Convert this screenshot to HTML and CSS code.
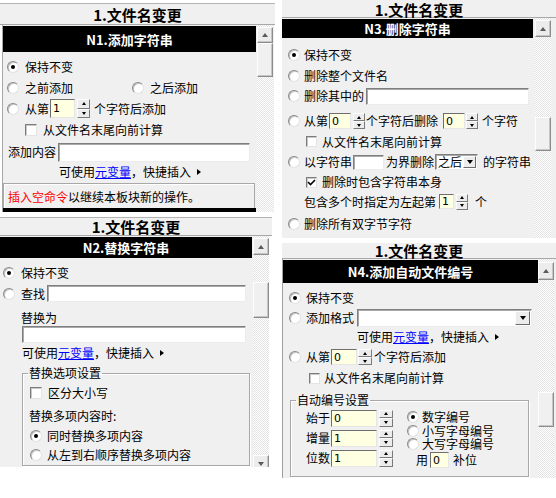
FILE: index.html
```html
<!DOCTYPE html>
<html lang="zh-CN">
<head>
<meta charset="utf-8">
<title>文件名变更</title>
<link rel="stylesheet" href="styles.css">
</head>
<body>
<div class="page">
  <div class="col col-left">
    <section class="panel p1">
      <div class="title">1.文件名变更</div>
      <div class="body">
        <div class="main">
          <div class="hdr">N1.添加字符串</div>
          <div class="content">
            <div class="row h20 pl4 mt5"><span class="rb on"></span><span class="t">保持不变</span></div>
            <div class="row h21 pl4"><span class="opt"><span class="rb"></span><span class="t">之前添加</span></span><span class="rb"></span><span class="t">之后添加</span></div>
            <div class="row h21 pl4"><span class="rb"></span><span class="t">从第</span><span class="num n-p1">1</span><span class="spin s-p1"><i class="su"></i><i class="sd"></i></span><span class="t ml4">个字符后添加</span></div>
            <div class="row h22 pl22"><span class="cb"></span><span class="t">从文件名末尾向前计算</span></div>
            <div class="row h22 pl5"><span class="t">添加内容</span><span class="edit e-p1"></span></div>
            <div class="row h17 pl56"><span class="t">可使用<span class="link">元变量</span>，快捷插入</span><span class="tri"></span></div>
            <div class="notice"><span class="red">插入空命令</span><span class="t"> 以继续本板块新的操作。</span></div>
            <div class="cutbar"></div>
          </div>
        </div>
        <div class="scroll"><span class="sbtn up"></span><span class="thumb"></span></div>
      </div>
    </section>

    <section class="panel p2">
      <div class="title">1.文件名变更</div>
      <div class="body">
        <div class="main">
          <div class="hdr">N2.替换字符串</div>
          <div class="content">
            <div class="row h20 pl3 mt5"><span class="rb on"></span><span class="t">保持不变</span></div>
            <div class="row h21 pl3"><span class="rb"></span><span class="t">查找</span><span class="edit e-p2a"></span></div>
            <div class="row h16 pl21 mt6"><span class="t">替换为</span></div>
            <div class="row h17 pl22"><span class="edit e-p2b"></span></div>
            <div class="row h18 pl22 mt1"><span class="t">可使用<span class="link">元变量</span>，快捷插入</span><span class="tri"></span></div>
            <fieldset class="group g-p2">
              <legend>替换选项设置</legend>
              <div class="row h20 pl7 mt4"><span class="cb"></span><span class="t">区分大小写</span></div>
              <div class="row h20 pl6 mt3"><span class="t">替换多项内容时:</span></div>
              <div class="row h19 pl7"><span class="rb on"></span><span class="t">同时替换多项内容</span></div>
              <div class="row h20 pl7"><span class="rb"></span><span class="t">从左到右顺序替换多项内容</span></div>
            </fieldset>
          </div>
        </div>
        <div class="scroll"><span class="sbtn up"></span><span class="thumb"></span><span class="sbtn down"></span></div>
      </div>
    </section>
  </div>

  <div class="col col-right">
    <section class="panel p3">
      <div class="title">1.文件名变更</div>
      <div class="body">
        <div class="main">
          <div class="hdr">N3.删除字符串</div>
          <div class="content">
            <div class="row h20 pl6 mt7"><span class="rb on"></span><span class="t">保持不变</span></div>
            <div class="row h21 pl6"><span class="rb"></span><span class="t">删除整个文件名</span></div>
            <div class="row h20 pl6"><span class="rb"></span><span class="t">删除其中的</span><span class="edit e-p3a"></span></div>
            <div class="row h20 pl6 mt5"><span class="rb"></span><span class="t">从第</span><span class="num n-p3">0</span><span class="spin s-p3"><i class="su"></i><i class="sd"></i></span><span class="t ml1">个字符后删除</span><span class="num n-p3 ml5">0</span><span class="spin s-p3 ml1"><i class="su"></i><i class="sd"></i></span><span class="t ml4">个字符</span></div>
            <div class="row h21 pl24"><span class="cb"></span><span class="t">从文件名末尾向前计算</span></div>
            <div class="row h20 pl6"><span class="rb"></span><span class="t">以字符串</span><span class="edit e-p3b"></span><span class="t ml2">为界删除</span><span class="combo c-p3"><span class="val">之后</span><span class="dd"></span></span><span class="t ml5">的字符串</span></div>
            <div class="row h20 pl24"><span class="cb on"><svg viewBox="0 0 9 9" width="9" height="9"><path d="M1 4 L3.5 6.5 L8 2" fill="none" stroke="#000" stroke-width="1.6"/></svg></span><span class="t">删除时包含字符串本身</span></div>
            <div class="row h19 pl22"><span class="t">包含多个时指定为左起第</span><span class="num n-p3b">1</span><span class="spin s-p3b"><i class="su"></i><i class="sd"></i></span><span class="t ml7">个</span></div>
            <div class="row h20 pl6 mt3"><span class="rb"></span><span class="t">删除所有双字节字符</span></div>
          </div>
        </div>
        <div class="scroll"><span class="sbtn up"></span><span class="thumb"></span></div>
      </div>
    </section>

    <section class="panel p4">
      <div class="title">1.文件名变更</div>
      <div class="body">
        <div class="main">
          <div class="hdr">N4.添加自动文件编号</div>
          <div class="content">
            <div class="row h20 pl6 mt5"><span class="rb on"></span><span class="t">保持不变</span></div>
            <div class="row h20 pl6"><span class="rb"></span><span class="t">添加格式</span><span class="combo c-p4"><span class="val"></span><span class="dd"></span></span></div>
            <div class="row h18 pl74"><span class="t">可使用<span class="link">元变量</span>，快捷插入</span><span class="tri"></span></div>
            <div class="row h22 pl6"><span class="rb"></span><span class="t">从第</span><span class="num n-p4">0</span><span class="spin s-p4"><i class="su"></i><i class="sd"></i></span><span class="t ml2">个字符后添加</span></div>
            <div class="row h20 pl26"><span class="cb"></span><span class="t">从文件名末尾向前计算</span></div>
            <fieldset class="group g-p4">
              <legend>自动编号设置</legend>
              <div class="numset">
                <div class="ncol">
                  <div class="row h20"><span class="t">始于</span><span class="num n-p4b">0</span><span class="spin s-p4b"><i class="su"></i><i class="sd"></i></span></div>
                  <div class="row h20"><span class="t">增量</span><span class="num n-p4b">1</span><span class="spin s-p4b"><i class="su"></i><i class="sd"></i></span></div>
                  <div class="row h20"><span class="t">位数</span><span class="num n-p4b">1</span><span class="spin s-p4b"><i class="su"></i><i class="sd"></i></span></div>
                </div>
                <div class="rcol">
                  <div class="row h14 mt2"><span class="rb on"></span><span class="t">数字编号</span></div>
                  <div class="row h13"><span class="rb"></span><span class="t">小写字母编号</span></div>
                  <div class="row h14"><span class="rb"></span><span class="t">大写字母编号</span></div>
                  <div class="row h18 pl9"><span class="t">用</span><span class="num n-p4c">0</span><span class="t ml4">补位</span></div>
                </div>
              </div>
            </fieldset>
          </div>
        </div>
        <div class="scroll"><span class="sbtn up"></span><span class="thumb"></span></div>
      </div>
    </section>
  </div>
</div>
</body>
</html>
```

FILE: styles.css
```css
* { box-sizing: border-box; margin: 0; padding: 0; }
html, body { background: #fff; }
body {
  width: 556px;
  height: 498px;
  overflow: hidden;
  font-family: "Noto Sans CJK SC", "Noto Sans", sans-serif;
  font-size: 12px;
  line-height: 1;
  color: #000;
}
.page { display: flex; align-items: flex-start; }
.col { display: flex; flex-direction: column; }
.col-left { width: 275px; }
.col-right { width: 274px; margin-left: 7px; }

.panel { display: flex; flex-direction: column; }
.title {
  display: flex;
  align-items: center;
  justify-content: center;
  background: #f0f0f0;
  border-bottom: 1px solid #a8a8a8;
  font-size: 15px;
  font-weight: bold;
}
.body { display: flex; background: #f0f0f0; overflow: hidden; }
.main { display: flex; flex-direction: column; }
.hdr {
  background: #000;
  color: #fff;
  font-weight: bold;
  font-size: 13px;
  display: flex;
  align-items: center;
  justify-content: center;
}
.content { display: flex; flex-direction: column; }

/* scrollbar */
.scroll {
  display: flex;
  flex-direction: column;
  width: 16px;
  flex: none;
  background-color: #fff;
  background-image: repeating-conic-gradient(#e3e3e3 0 25%, #fff 0 50%);
  background-size: 2px 2px;
}
.sbtn, .thumb {
  display: flex;
  align-items: center;
  justify-content: center;
  flex: none;
  background: #ececec;
  border: 1px solid;
  border-color: #fdfdfd #8c8c8c #8c8c8c #fdfdfd;
  box-shadow: inset -1px -1px #c6c6c6;
}
.sbtn { height: 17px; }
.sbtn::after {
  content: "";
  border-left: 3.5px solid transparent;
  border-right: 3.5px solid transparent;
}
.sbtn.up::after { border-bottom: 4px solid #5a5a5a; }
.sbtn.down::after { border-top: 4px solid #5a5a5a; }
.thumb { background: #f0f0f0; }

/* panel 1 */
.p1 { padding-top: 3px; }
.p1 .title { height: 22px; border-top: 1px solid #b4b4b4; }
.p1 .body { width: 272px; margin-left: 2px; border-left: 1px solid #a8a8a8; }
.p1 .main { width: 253px; }
.p1 .hdr { height: 26px; margin-top: 1px; }
.p1 .scroll { margin-left: 1px; padding-top: 2px; }
.p1 .sbtn { height: 16px; }
.p1 .thumb { height: 34px; }
.p1 .rb { margin-right: 6px; }
.p1 .cb { margin-right: 6px; }
.opt { display: flex; align-items: center; width: 125px; }
.notice {
  margin-top: 3px;
  height: 25px;
  width: 252px;
  border: 1px solid #a8a8a8;
  border-bottom: none;
  box-shadow: inset 1px 1px #fff;
  display: flex;
  align-items: center;
  padding-left: 4px;
  padding-top: 2px;
  white-space: nowrap;
}
.red { color: #ff0000; }
.cutbar { height: 4px; background: #000; }

/* panel 2 */
.p2 { padding-top: 5px; }
.p2 .title { height: 19px; border-top: 1px solid #b4b4b4; width: 272px; }
.p2 .body { width: 269px; height: 231px; }
.p2 .main { width: 252px; }
.p2 .hdr { height: 21px; margin-top: 1px; }
.p2 .scroll { margin-left: 1px; padding-top: 2px; }
.p2 .thumb { height: 36px; margin-top: 27px; }
.p2 .sbtn.down { margin-top: 137px; }
.p2 .rb { margin-right: 6px; }
.p2 .cb { margin-right: 6px; }
.g-p2 { margin-left: 22px; width: 228px; margin-top: 5px; }
.g-p2 .rb { margin-right: 5px; }

/* panel 3 */
.p3 .title { height: 18px; padding-top: 1px; }
.p3 .body { height: 220px; }
.p3 .main { width: 251px; }
.p3 .hdr { height: 19px; margin-top: 1px; }
.p3 .scroll { margin-left: 2px; padding-top: 2px; }
.p3 .thumb { height: 34px; margin-top: 80px; }
.p3 .rb { margin-right: 4px; }
.p3 .cb { margin-right: 5px; width: 11px; height: 11px; }

/* panel 4 */
.p4 .title { height: 16px; margin-top: 5px; }
.p4 .body { height: 219px; border-left: 1px solid #a0a0a0; }
.p4 .main { width: 255px; }
.p4 .hdr { height: 23px; margin-top: 1px; }
.p4 .scroll { padding-top: 3px; }
.p4 .sbtn { height: 18px; }
.p4 .thumb { height: 35px; margin-top: 112px; }
.p4 .rb { margin-right: 5px; }
.p4 .cb { margin-right: 4px; width: 11px; height: 11px; }
.g-p4 { margin-left: 7px; width: 239px; margin-top: 6px; padding: 2px 0 7px 0; }
.numset { display: flex; }
.ncol { display: flex; flex-direction: column; padding-left: 15px; }
.rcol { display: flex; flex-direction: column; margin-left: 14px; }
.rcol .rb { margin-right: 3px; }

/* group box */
.group {
  border: 1px solid #a8a8a8;
  box-shadow: inset 1px 1px #fff, 1px 1px #fff;
  min-width: 0;
}
.group legend {
  margin-left: 5px;
  padding: 0 1px;
  font-size: 12px;
  line-height: 12px;
}

/* rows */
.row { display: flex; align-items: center; white-space: nowrap; flex: none; }
.t { display: inline-block; white-space: nowrap; }
.h13 { height: 13px; } .h14 { height: 14px; } .h16 { height: 16px; } .h17 { height: 17px; }
.h18 { height: 18px; } .h19 { height: 19px; } .h20 { height: 20px; } .h21 { height: 21px; }
.h22 { height: 22px; }
.mt1 { margin-top: 1px; } .mt2 { margin-top: 2px; } .mt3 { margin-top: 3px; } .mt4 { margin-top: 4px; }
.mt5 { margin-top: 5px; } .mt6 { margin-top: 6px; } .mt7 { margin-top: 7px; }
.pl3 { padding-left: 3px; } .pl4 { padding-left: 4px; } .pl5 { padding-left: 5px; } .pl6 { padding-left: 6px; }
.pl7 { padding-left: 7px; } .pl9 { padding-left: 9px; } .pl21 { padding-left: 21px; } .pl22 { padding-left: 22px; }
.pl24 { padding-left: 24px; } .pl26 { padding-left: 26px; } .pl56 { padding-left: 56px; } .pl74 { padding-left: 74px; }
.ml1 { margin-left: 1px; } .ml2 { margin-left: 2px; } .ml4 { margin-left: 4px; } .ml5 { margin-left: 5px; }
.ml7 { margin-left: 7px; }

/* controls */
.rb {
  position: relative;
  display: inline-block;
  flex: none;
  width: 12px;
  height: 12px;
  border-radius: 50%;
  background: #fff;
  border: 1px solid;
  border-color: #8a8a8a #e2e2e2 #e2e2e2 #8a8a8a;
  box-shadow: inset 1px 1px #c4c4c4;
}
.rb.on::after {
  content: "";
  position: absolute;
  left: 3px;
  top: 3px;
  width: 4px;
  height: 4px;
  border-radius: 50%;
  background: #000;
}
.cb {
  display: inline-flex;
  align-items: center;
  justify-content: center;
  flex: none;
  width: 12px;
  height: 12px;
  background: #fff;
  border: 1px solid;
  border-color: #7c7c7c #e4e4e4 #e4e4e4 #7c7c7c;
  box-shadow: inset 1px 1px #c8c8c8;
}
.edit {
  display: inline-block;
  flex: none;
  background: #fff;
  border: 1px solid;
  border-color: #7f7f7f #ececec #ececec #7f7f7f;
  box-shadow: inset 1px 1px #a9a9a9;
}
.e-p1 { width: 192px; height: 19px; margin-left: 2px; }
.e-p2a { width: 199px; height: 17px; margin-left: 2px; }
.e-p2b { width: 224px; height: 17px; }
.e-p3a { width: 163px; height: 17px; margin-left: 2px; }
.e-p3b { width: 31px; height: 15px; margin-left: 1px; }

.num {
  display: inline-flex;
  align-items: center;
  flex: none;
  background: #ffffe1;
  border: 1px solid;
  border-color: #6e6e6e #e6e6e6 #e6e6e6 #6e6e6e;
  font-family: "DejaVu Sans", sans-serif;
  font-size: 11px;
  padding-left: 2px;
}
.n-p1 { width: 25px; height: 19px; margin-left: 1px; }
.n-p3 { width: 22px; height: 16px; margin-left: 1px; }
.n-p3.ml5 { margin-left: 5px; }
.n-p3b { width: 15px; height: 15px; margin-left: 3px; }
.n-p4 { width: 26px; height: 16px; margin-left: 1px; }
.n-p4b { width: 46px; height: 17px; margin-left: 1px; }
.n-p4c { width: 19px; height: 16px; margin-left: 2px; }

.spin { display: inline-flex; flex-direction: column; flex: none; margin-left: 2px; }
.spin i {
  flex: 1;
  display: flex;
  align-items: center;
  justify-content: center;
  background: #ececec;
  border: 1px solid;
  border-color: #fdfdfd #7a7a7a #7a7a7a #fdfdfd;
}
.spin i::after {
  content: "";
  border-left: 2.5px solid transparent;
  border-right: 2.5px solid transparent;
}
.spin .su::after { border-bottom: 3px solid #000; }
.spin .sd::after { border-top: 3px solid #000; }
.s-p1 { width: 13px; height: 19px; }
.s-p3 { width: 12px; height: 16px; }
.s-p3.ml1 { margin-left: 1px; }
.s-p3b { width: 12px; height: 16px; }
.s-p4 { width: 14px; height: 16px; margin-left: 1px; }
.s-p4b { width: 14px; height: 17px; }

.combo {
  display: inline-flex;
  align-items: stretch;
  flex: none;
  background: #fff;
  border: 1px solid;
  border-color: #7f7f7f #ececec #ececec #7f7f7f;
  box-shadow: inset 1px 1px #a9a9a9;
  padding: 1px;
}
.combo .val { flex: 1; display: flex; align-items: center; padding-left: 1px; }
.combo .dd {
  width: 15px;
  display: flex;
  align-items: center;
  justify-content: center;
  background: #ececec;
  border: 1px solid;
  border-color: #fdfdfd #6a6a6a #6a6a6a #fdfdfd;
}
.combo .dd::after {
  content: "";
  border-left: 3.5px solid transparent;
  border-right: 3.5px solid transparent;
  border-top: 4px solid #000;
}
.c-p3 { width: 43px; height: 16px; margin-left: 1px; }
.c-p3 .dd { width: 13px; }
.c-p4 { width: 175px; height: 18px; margin-left: 3px; }

.link { color: #0000ff; text-decoration: underline; }
.tri {
  display: inline-block;
  margin-left: 6px;
  border-left: 4px solid #000;
  border-top: 3.5px solid transparent;
  border-bottom: 3.5px solid transparent;
}
```
